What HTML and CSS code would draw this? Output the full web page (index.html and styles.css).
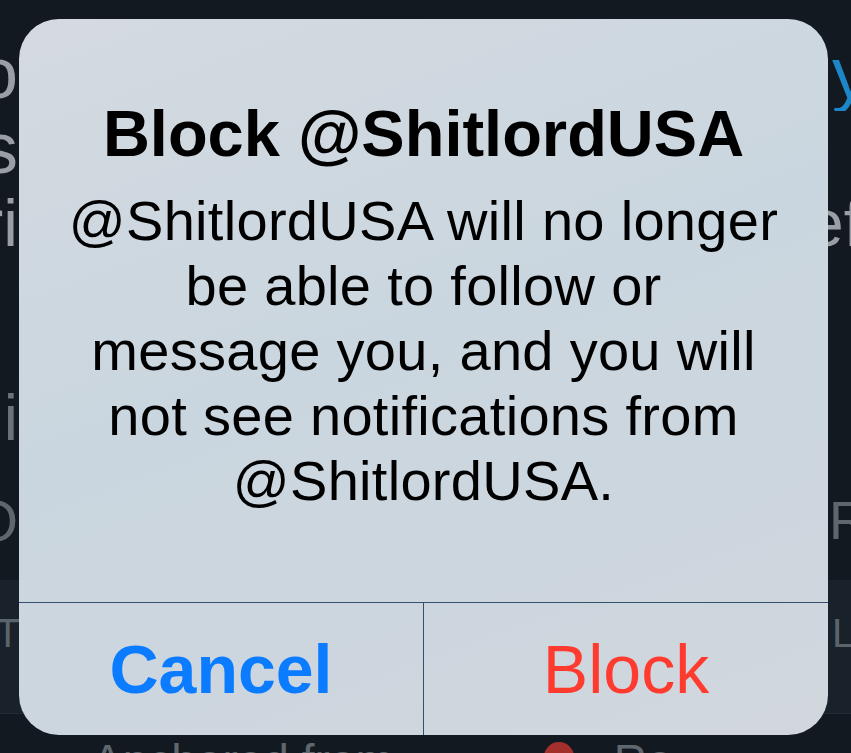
FILE: index.html
```html
<!DOCTYPE html>
<html lang="en">
<head>
  <meta charset="UTF-8" />
  <title>Block account</title>
  <link rel="stylesheet" href="styles.css">
</head>
<body>
  <!-- profile behind the alert -->
  <div class="profile">
    <div class="row row-name">
      <span class="edge-left">Bo</span>
      <span class="edge-right link">y</span>
    </div>
    <div class="row row-handle">
      <span class="edge-left">Us</span>
      <span class="edge-right"></span>
    </div>
    <div class="row row-bio">
      <span class="edge-left">Pri</span>
      <span class="edge-right wide">ef</span>
    </div>
    <div class="row row-meta">
      <span class="edge-left">li</span>
      <span class="edge-right"></span>
    </div>
    <div class="row row-stats">
      <span class="edge-left">FO</span>
      <span class="edge-right">R</span>
    </div>
    <div class="row tabs">
      <span class="edge-left">ET</span>
      <span class="edge-right">L</span>
    </div>
    <div class="row row-tweet">
      <span class="tweet-text">Anchored from</span>
      <span class="tweet-dot"></span>
      <span class="tweet-text">Ro</span>
    </div>
  </div>

  <!-- alert -->
  <div class="alert">
    <div class="alert-body">
      <h1 class="alert-title">Block @ShitlordUSA</h1>
      <p class="alert-message">@ShitlordUSA will no longer<br>be able to follow or<br>message you, and you will<br>not see notifications from<br>@ShitlordUSA.</p>
    </div>
    <div class="alert-actions">
      <button class="action cancel">Cancel</button>
      <button class="action destructive">Block</button>
    </div>
  </div>
</body>
</html>
```

FILE: styles.css
```css
* { box-sizing: border-box; }
html, body {
  height: 100%;
}
body {
  margin: 0;
  background: #121920;
  font-family: "Liberation Sans", Arial, sans-serif;
  overflow: hidden;
  position: relative;
}

/* profile page behind */
.profile {
  padding-top: 36px;
  height: 753px;
  overflow: hidden;
}
.row {
  display: flex;
  justify-content: space-between;
  font-size: 72px;
  line-height: 75px;
  height: 75px;
  color: #9a9fa5;
  white-space: nowrap;
}
.edge-left {
  width: 18px;
  overflow: hidden;
  display: flex;
  justify-content: flex-end;
}
.edge-right {
  width: 19px;
  overflow: hidden;
}
.edge-right.wide {
  width: 44px;
}
.link {
  color: #1d86c8;
}
.row-bio {
  font-size: 66px;
}
.row-meta {
  margin-top: 120px;
  font-size: 64px;
  color: #6b737a;
}
.row-stats {
  margin-top: 27px;
  font-size: 58px;
  color: #5f676e;
}
.row-stats .edge-right {
  width: 22px;
  font-size: 54px;
  letter-spacing: -4px;
}
.tabs {
  margin-top: 22px;
  height: 134px;
  padding-top: 28px;
  line-height: 50px;
  font-size: 40px;
  color: #5c646b;
  background: #19212a;
  border-bottom: 1px solid #232c35;
}
.tabs .edge-left {
  width: 20px;
}
.row-tweet {
  justify-content: flex-start;
  align-items: flex-start;
  padding-left: 92px;
  gap: 40px;
  height: 46px;
  font-size: 46px;
  line-height: 46px;
  margin-top: 24px;
  color: #5f676e;
}
.tweet-text {
  margin-right: 110px;
}
.tweet-dot {
  width: 30px;
  height: 30px;
  border-radius: 50%;
  background: #a3302b;
  margin-top: 4px;
}

/* alert */
.alert {
  position: absolute;
  left: 19px;
  top: 19px;
  width: 809px;
  height: 716px;
  border-radius: 40px;
  overflow: hidden;
  background: linear-gradient(160deg, #d4dae0 0%, #cad6df 45%, #cdd6de 75%, #d1d7dd 100%);
  display: flex;
  flex-direction: column;
}
.alert-body {
  height: 583px;
  padding: 78px 20px 0;
  text-align: center;
}
.alert-title {
  margin: 0;
  font-size: 65px;
  line-height: 74px;
  font-weight: bold;
  color: #000;
}
.alert-message {
  margin: 17px 0 0;
  font-size: 56px;
  line-height: 65px;
  letter-spacing: 0.3px;
  color: #000;
}
.alert-actions {
  flex: 1;
  display: flex;
  border-top: 1px solid #34506e;
}
.action {
  flex: 1;
  border: none;
  background: transparent;
  font-family: "Liberation Sans", Arial, sans-serif;
  font-size: 68px;
  padding: 0;
}
.cancel {
  color: #0b7bff;
  font-weight: bold;
  border-right: 1px solid #34506e;
}
.destructive {
  color: #ff3b30;
}
```
